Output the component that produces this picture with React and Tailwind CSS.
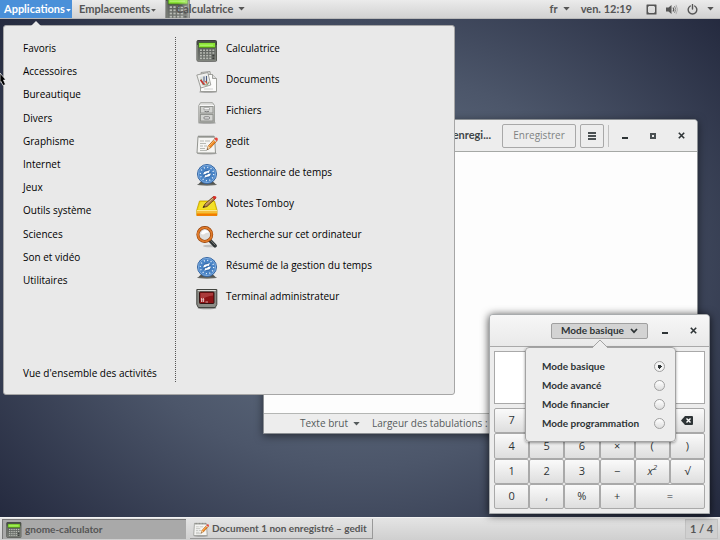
import React from "react";

function CalculatorIcon({ className }) {
  return (
    <svg viewBox="0 0 22 22" className={className} aria-hidden="true">
      <defs>
        <linearGradient id="calcBody" x1="0" y1="0" x2="0" y2="1">
          <stop offset="0" stopColor="#4c4f4c" />
          <stop offset="1" stopColor="#777b76" />
        </linearGradient>
      </defs>
      <ellipse cx="11" cy="21" rx="10.5" ry="1" fill="#000" opacity=".25" />
      <rect x="1" y="0.5" width="19.5" height="20.5" rx="1" fill="url(#calcBody)" stroke="#3c3e3a" />
      <path d="M1.5 5v15.500h18.500V5" fill="none" stroke="#92968e" strokeWidth=".7" />
      <rect x="2.500" y="2.500" width="17" height="5.500" fill="#3f6d1c" />
      <rect x="3" y="3" width="16" height="4.300" fill="#8ae234" />
      <path d="M4 5.200h13" stroke="#b6f578" strokeWidth="1" />
      {[9.5, 12.2, 14.9, 17.6].map((y) =>
        [4, 7.1, 10.2, 13.3, 16.4].map((x) => (
          <rect key={x + "-" + y} x={x} y={y} width="1.900" height="1.500" fill={x > 16 && y > 14 ? "#3a3c38" : "#b9bcb5"} />
        ))
      )}
    </svg>
  );
}

function DocumentsIcon({ className }) {
  return (
    <svg viewBox="0 0 22 22" className={className} aria-hidden="true">
      <ellipse cx="12" cy="21" rx="9" ry="1" fill="#000" opacity=".25" />
      <path d="M5 1.500l9-1 2 14-9 2z" fill="#e2e2df" stroke="#8b8d88" strokeWidth=".8" />
      <path d="M8 3.500h8.500l4 4v13H4.500V15z" fill="#fbfbfa" stroke="#8b8d88" strokeWidth=".8" />
      <path d="M16.500 3.500v4h4" fill="#ddd" stroke="#8b8d88" strokeWidth=".8" />
      <path d="M.8 4l11-2.500 3 12.500-10 3z" fill="#f0f0ee" stroke="#8b8d88" strokeWidth=".8" />
      <path d="M3.500 6l7.500-1.800 2 8.500-7 2z" fill="#dfe2df" />
      <path d="M5 8l2 5.500 4 .5 2-3" fill="none" stroke="#8aa184" strokeWidth="1.200" />
      <path d="M4.500 9l2.500 3 1.500 1.500" stroke="#c9302c" strokeWidth="1.600" fill="none" />
      <path d="M8 5.500v6M10.500 5v6" stroke="#4a5b83" strokeWidth="1" />
      <path d="M9.500 10l1.500 2.500" stroke="#d5502a" strokeWidth="1.300" />
      <path d="M8 18h9" stroke="#c6c6c4" strokeWidth=".8" />
    </svg>
  );
}

function FilesIcon({ className }) {
  return (
    <svg viewBox="0 0 22 22" className={className} aria-hidden="true">
      <defs>
        <linearGradient id="cabinet" x1="0" y1="0" x2="0" y2="1">
          <stop offset="0" stopColor="#e6e6e4" />
          <stop offset="1" stopColor="#a9aaa6" />
        </linearGradient>
      </defs>
      <ellipse cx="11" cy="21" rx="9" ry="1" fill="#000" opacity=".25" />
      <path d="M4.500.7h12l2 2.800v17H2.800v-17z" fill="url(#cabinet)" stroke="#999b96" strokeWidth=".9" />
      <path d="M3.500 3.500h14.500" stroke="#fff" strokeWidth=".8" />
      <rect x="4.500" y="4.500" width="12.500" height="6.500" fill="#d3d4d1" stroke="#8d8f8a" strokeWidth=".9" />
      <rect x="4.500" y="12.500" width="12.500" height="6.500" fill="#d3d4d1" stroke="#8d8f8a" strokeWidth=".9" />
      <rect x="8" y="5.800" width="5.500" height="2" fill="#fff" stroke="#888" strokeWidth=".6" />
      <path d="M8.500 9.300q2.300 1 4.500 0" fill="none" stroke="#777" />
      <rect x="8" y="14.800" width="5.500" height="2.200" rx=".8" fill="#eee" stroke="#666" strokeWidth=".8" />
    </svg>
  );
}

function GeditIcon({ className }) {
  return (
    <svg viewBox="0 0 22 22" className={className} aria-hidden="true">
      <ellipse cx="11" cy="20.500" rx="10" ry="1" fill="#000" opacity=".25" />
      <path d="M2 3.500h16.500l1 16.500H1z" fill="#f5f5f3" stroke="#888a85" strokeWidth=".9" />
      <path d="M2 3.500h16.500v1.500H2z" fill="#c5c6c2" />
      <path d="M3 2.500v2M5 2.500v2M7 2.500v2M9 2.500v2M11 2.500v2M13 2.500v2M15 2.500v2M17 2.500v2" stroke="#73756f" strokeWidth=".9" />
      <path d="M4 8h4M9 8h5M4 10.500h6M4 13h3M8 13h3M4 15.500h5M4 17.500h7" stroke="#b0b2ad" strokeWidth=".9" />
      <path d="M11 16.800l1.200-3.700L19 5.500l2.200 2-6.900 7.600z" fill="#f08a24" stroke="#a85106" strokeWidth=".7" />
      <path d="M13 13.200l6.500-7" stroke="#fcc583" strokeWidth=".8" />
      <path d="M11 16.800l1.200-3.700 2.100 2z" fill="#ecd7b0" />
      <path d="M11 16.800l.5-1.500.9.900z" fill="#222" />
      <path d="M18 6.500l1.700-1.900q2.300-.3 2.200 2l-1.700 1.900z" fill="#e7423c" />
      <path d="M17.500 7l.9-1 2.200 2-.9 1z" fill="#d7d9d4" />
    </svg>
  );
}

function TimeIcon({ className }) {
  return (
    <svg viewBox="0 0 22 22" className={className} aria-hidden="true">
      <path d="M2 20.500l3.500-3.500h11l3.500 3.500z" fill="#555753" />
      <ellipse cx="11" cy="20.500" rx="10" ry="1.200" fill="#555753" opacity=".8" />
      <circle cx="11" cy="10" r="9.500" fill="#4a84c6" stroke="#3566a3" />
      <circle cx="11" cy="10" r="8.600" fill="none" stroke="#86b4e4" strokeWidth=".8" />
      <circle cx="11" cy="10" r="6.700" fill="none" stroke="#e7f1fb" strokeWidth="1.300" strokeDasharray="1.100 2.408" />
      <circle cx="11" cy="10" r="4.300" fill="#3a6fae" />
      <path d="M7.200 10.500q.5-3.300 3.800-3.200l3-1.300-1.300 3q-1.700-1-2.700.8zM14.800 9.500q-.5 3.300-3.800 3.200l-2.700 1.100 1-2.800q1.700.8 2.700-1z" fill="#fff" />
    </svg>
  );
}

function TomboyIcon({ className }) {
  return (
    <svg viewBox="0 0 22 22" className={className} aria-hidden="true">
      <path d="M3.500 6h15l2.500 9v5.500H.8V15z" fill="#edd400" stroke="#c4a000" strokeWidth=".8" />
      <path d="M4.500 7h13.300l2 7.500H2z" fill="#f3e02a" />
      <path d="M.8 15h20.200v3.500H.8z" fill="#f5bd3a" />
      <path d="M.8 18.500h20.200v2.300H.8z" fill="#f57900" />
      <path d="M1 15.500h20" stroke="#fff0a0" strokeWidth=".8" />
      <path d="M7 12.500l2-3.500L17.500 1.500l2 2L11 11.500z" fill="#b5824c" stroke="#4f3412" strokeWidth=".8" />
      <path d="M9.500 9.800l8-7" stroke="#e2bf8e" strokeWidth=".8" />
      <path d="M7 12.500l1-1.800 1 1z" fill="#222" />
      <path d="M16.300 2.500L18 1q2.500-.3 2.500 1.800l-1.900 1.800z" fill="#d9302c" />
    </svg>
  );
}

function SearchIcon({ className }) {
  return (
    <svg viewBox="0 0 22 22" className={className} aria-hidden="true">
      <ellipse cx="14" cy="20" rx="7" ry="1.300" fill="#000" opacity=".18" />
      <path d="M13.500 14l5.500 5.800" stroke="#2e3436" strokeWidth="3.600" strokeLinecap="round" />
      <path d="M13.500 13.300l5.500 5.700" stroke="#777a75" strokeWidth="1" strokeLinecap="round" />
      <circle cx="8.800" cy="8.500" r="6.900" fill="#dededc" stroke="#8f3b02" strokeWidth="3" />
      <circle cx="8.800" cy="8.500" r="6.900" fill="none" stroke="#e07b2c" strokeWidth="1.900" />
      <path d="M5 8q.5-3.500 4-4 3-.2 4 2.500-3 0-4 1-1.500 1.500-4 .5z" fill="#fff" />
    </svg>
  );
}

function TerminalIcon({ className }) {
  return (
    <svg viewBox="0 0 22 22" className={className} aria-hidden="true">
      <ellipse cx="11" cy="20" rx="9.500" ry="1.300" fill="#000" opacity=".35" />
      <path d="M.8 1.500h20v15l-1.500 3H2.300l-1.500-3z" fill="#8b8c86" stroke="#42443f" />
      <path d="M1.800 2.500h18" stroke="#d9dad6" />
      <rect x="3.500" y="4" width="14.500" height="11.500" rx=".8" fill="#8d1416" stroke="#2b0b0b" strokeWidth=".9" />
      <path d="M4.500 5H17v2.500Q10.500 8 4.500 12z" fill="#c05555" opacity=".6" />
      <path d="M5.500 10v4M7.500 10v4M5 11.300h3.300M5 13h3.300M9.500 14h2.500" stroke="#eec9c9" strokeWidth=".8" />
    </svg>
  );
}

function Caret({ className }) {
  return (
    <svg viewBox="0 0 8 5" className={className} aria-hidden="true">
      <path d="M0 0h8L4 4.500z" fill="currentColor" />
    </svg>
  );
}

const categories = ["Favoris", "Accessoires", "Bureautique", "Divers", "Graphisme", "Internet", "Jeux", "Outils système", "Sciences", "Son et vidéo", "Utilitaires"];

const apps = [
  ["Calculatrice", CalculatorIcon],
  ["Documents", DocumentsIcon],
  ["Fichiers", FilesIcon],
  ["gedit", GeditIcon],
  ["Gestionnaire de temps", TimeIcon],
  ["Notes Tomboy", TomboyIcon],
  ["Recherche sur cet ordinateur", SearchIcon],
  ["Résumé de la gestion du temps", TimeIcon],
  ["Terminal administrateur", TerminalIcon],
];

function TopPanel() {
  return (
    <header className="flex h-[19px] shrink-0 items-stretch border-b border-[#b9b9b9] bg-linear-to-b from-[#ebebeb] to-[#d2d2d2] font-['Lato','Noto_Sans',sans-serif] text-[11px] font-bold text-[#555]">
      <button className="flex w-[72px] items-center gap-px bg-[#4a90d9] pl-1 text-white">
        Applications
        <Caret className="mt-[2px] h-[3px] w-[5px]" />
      </button>
      <button className="flex w-[93px] items-center gap-px pl-[7px]">
        Emplacements
        <Caret className="mt-[2px] h-[3px] w-[5px]" />
      </button>
      <button className="relative flex items-center gap-[5px] pl-[11px]">
        <span className="absolute inset-y-0 left-0 w-[26px] overflow-hidden [mask-image:linear-gradient(to_right,#000_50%,#0008)]">
          <CalculatorIcon className="-mt-[5px] h-[26px] w-[26px]" />
        </span>
        <span className="relative">Calculatrice</span>
        <Caret className="h-[4px] w-[7px]" />
      </button>
      <div className="ml-auto flex items-center pr-[6px]">
        <button className="flex items-center gap-[5px]">
          fr
          <Caret className="h-[4px] w-[7px]" />
        </button>
        <span className="ml-[11px]">ven. 12:19</span>
        <button className="ml-[14px] flex items-center gap-[9px]" aria-label="Système">
          <svg viewBox="0 0 11 11" className="h-[11px] w-[11px]" aria-hidden="true">
            <path d="M1 .5h9q.5 0 .5.500v9q0 .5-.5.500H1q-.5 0-.5-.5V1q0-.5.500-.5zM3 2L2 3v5l1 1h5l1-1V3L8 2z" fill="#555" fillRule="evenodd" />
          </svg>
          <svg viewBox="0 0 12 11" className="h-[11px] w-[12px]" aria-hidden="true">
            <path d="M0 3.500h2.500L5.500 1v9L2.500 7.500H0z" fill="#555" />
            <path d="M7 3.500q1.500 2 0 4" fill="none" stroke="#555" strokeWidth="1.200" />
            <path d="M8.500 2q2.500 3.500 0 7" fill="none" stroke="#888" />
            <path d="M10 .8q3 4.700 0 9.400" fill="none" stroke="#b0b0b0" />
          </svg>
          <svg viewBox="0 0 11 11" className="h-[11px] w-[11px]" aria-hidden="true">
            <path d="M3.300 2a4.300 4.300 0 1 0 4.400 0M5.500.5v4.500" fill="none" stroke="#555" strokeWidth="1.400" strokeLinecap="round" />
          </svg>
          <Caret className="h-[4px] w-[7px]" />
        </button>
      </div>
    </header>
  );
}

function AppMenu() {
  return (
    <nav className="absolute top-[25px] left-[3px] z-10 flex w-[452px] rounded-[3px] border border-[#a6a6a6] bg-[#e9e9e9] pt-[11px] pb-[12px] text-[10px] text-black">
      <svg viewBox="0 0 10 5" className="absolute -top-[5px] left-[27px] h-[5px] w-[10px]" aria-hidden="true">
        <path d="M0 5l5-5 5 5z" fill="#e9e9e9" />
      </svg>
      <div className="flex w-[172px] flex-col border-r border-dotted border-[#555] pl-[19px]">
        <div className="grid h-[255px] auto-rows-fr">
          {categories.map((c) => (
            <button key={c} className="text-left">{c}</button>
          ))}
        </div>
        <button className="mt-auto h-[18px] text-left">Vue d'ensemble des activités</button>
      </div>
      <div className="flex flex-1 flex-col pb-[66px] pl-[20px]">
        {apps.map(([name, Icon]) => (
          <button key={name} className="flex h-[31px] items-start gap-[8px] pt-[2px] text-left">
            <Icon className="mt-px h-[22px] w-[22px]" />
            <span className="leading-[18px]">{name}</span>
          </button>
        ))}
      </div>
    </nav>
  );
}

function WindowControls({ maximize }) {
  return (
    <>
      <button aria-label="Réduire" className="flex h-4 w-4 items-center justify-center">
        <span className="mt-[4px] h-[2px] w-[6px] bg-[#2e3436]" />
      </button>
      {maximize && (
        <button aria-label="Agrandir" className="flex h-4 w-4 items-center justify-center">
          <span className="h-[6px] w-[6px] border-2 border-[#4a5052]" />
        </button>
      )}
      <button aria-label="Fermer" className="flex h-4 w-4 items-center justify-center">
        <svg viewBox="0 0 7 7" className="h-[7px] w-[7px]" aria-hidden="true">
          <path d="M.8.8l5.400 5.400M6.200.8L.8 6.200" stroke="#2e3436" strokeWidth="1.600" />
        </svg>
      </button>
    </>
  );
}

function GeditWindow() {
  return (
    <section className="absolute top-[119px] left-[263px] flex h-[315px] w-[435px] flex-col rounded-t-[4px] border border-[#8c9094] bg-[#fdfdfd] shadow-[0_2px_8px_rgba(0,0,0,0.5)]">
      <header className="flex h-[32px] items-center justify-end rounded-t-[3px] border-b border-[#a5a8a5] bg-[#ededed] pr-[8px] text-[10px] text-[#3e4547]">
        <h2 className="mr-[11px] font-['Lato','Noto_Sans',sans-serif] text-[11px] font-bold">enregi...</h2>
        <button className="h-[24px] w-[74px] rounded-[2px] border border-[#a8a8a8] text-[#7e8283]">Enregistrer</button>
        <button aria-label="Menu" className="ml-[4px] flex h-[24px] w-[24px] flex-col items-center justify-center gap-px rounded-[2px] border border-[#a8a8a8]">
          <span className="h-[2px] w-[8px] bg-[#4a5052]" />
          <span className="h-[2px] w-[8px] bg-[#4a5052]" />
          <span className="h-[2px] w-[8px] bg-[#4a5052]" />
        </button>
        <span className="mr-[8px] ml-[4px] h-[22px] w-px bg-[#c0c0c0]" />
        <div className="flex gap-[12px]">
          <WindowControls maximize />
        </div>
      </header>
      <textarea aria-label="Document" className="w-full flex-1 resize-none bg-[#fdfdfd] outline-none" />
      <footer className="flex h-[20px] items-center gap-[12px] border-t border-[#b4b6b4] bg-[#ededed] pl-[36px] text-[10px] text-[#555b5c]">
        <button className="flex items-center gap-[5px]">
          Texte brut
          <Caret className="h-[4px] w-[7px]" />
        </button>
        <button>Largeur des tabulations : 8</button>
      </footer>
    </section>
  );
}

const keys = [
  { label: "7" },
  { name: "8" },
  { name: "9" },
  { name: "Diviser" },
  { name: "Annuler" },
  { label: "⌫" },
  ...["4", "5", "6", "×", "(", ")", "1", "2", "3", "−", "x²", "√", "0", ",", "%", "+", "="].map((label) => ({ label })),
];
const modes = ["Mode basique", "Mode avancé", "Mode financier", "Mode programmation"];

function Key({ label, name }) {
  const base = "flex items-center justify-center rounded-[2px] border border-[#a9a9a9] bg-linear-to-b from-[#fafafa] to-[#dedede]";
  if (label === "=") return <button className={base + " col-span-2"}>=</button>;
  if (label === "x²")
    return (
      <button className={base + " italic"}>
        x<sup className="text-[8px]">2</sup>
      </button>
    );
  if (label === "⌫")
    return (
      <button aria-label="Effacer" className={base}>
        <svg viewBox="0 0 12 9" className="h-[9px] w-[12px]" aria-hidden="true">
          <path d="M4 0h7q1 0 1 1v7q0 1-1 1H4L0 4.500z" fill="#2e3436" />
          <path d="M5.500 2.500l4 4M9.500 2.500l-4 4" stroke="#fff" strokeWidth="1.400" />
        </svg>
      </button>
    );
  return <button aria-label={name} className={base}>{label}</button>;
}

function CalculatorWindow() {
  return (
    <section className="absolute top-[314px] left-[489px] flex h-[200px] w-[221px] flex-col rounded-t-[4px] border border-[#a8abad] bg-[#ededed] text-[#2e3436] shadow-[0_1px_9px_rgba(0,0,0,0.75)]">
      <header className="flex h-[32px] shrink-0 items-center justify-end gap-[9px] rounded-t-[3px] border-b border-[#a9a9a9] bg-linear-to-b from-[#f7f7f7] to-[#e9e9e9] pr-[8px]">
        <button className="flex h-[16px] w-[97px] items-center justify-center gap-[6px] rounded-[2px] border border-[#a0a0a0] bg-[#d3d3d3] font-['Lato','Noto_Sans',sans-serif] text-[10px] font-bold">
          Mode basique
          <svg viewBox="0 0 8 6" className="h-[6px] w-[8px]" aria-hidden="true">
            <path d="M1 1l3 3.200L7 1" fill="none" stroke="#2e3436" strokeWidth="1.700" />
          </svg>
        </button>
        <div className="flex gap-[12px]">
          <WindowControls />
        </div>
      </header>
      <div className="flex flex-1 flex-col gap-[4px] p-[4px]">
        <input aria-label="Calcul" className="h-[53px] w-full border border-[#a9a9a9] bg-white" />
        <div className="grid flex-1 grid-cols-6 grid-rows-4 text-[11px]">
          {keys.map((k) => (
            <Key key={k.label || k.name} {...k} />
          ))}
        </div>
      </div>
      <fieldset className="absolute top-[32px] left-[35px] flex w-[151px] flex-col rounded-[4px] border border-[#a3a3a3] bg-[#ededed] pt-[9px] pr-[10px] pb-[8px] pl-[16px] font-['Lato','Noto_Sans',sans-serif] text-[10px] font-bold shadow-[0_1px_3px_rgba(0,0,0,0.4)]">
        <svg viewBox="0 0 16 9" className="absolute -top-[9px] left-[66px] h-[9px] w-[16px]" aria-hidden="true">
          <path d="M0 9l8-8 8 8" fill="#ededed" stroke="#a3a3a3" />
        </svg>
        {modes.map((m, i) => (
          <label key={m} className="flex h-[19px] items-center justify-between">
            {m}
            <input
              type="radio"
              name="mode"
              defaultChecked={i === 0}
              className="h-[11px] w-[11px] appearance-none rounded-full border border-[#a0a0a0] bg-linear-to-b from-white to-[#dedede] checked:bg-[radial-gradient(circle,#2e3436_2px,#f4f4f4_2px)]"
            />
          </label>
        ))}
      </fieldset>
    </section>
  );
}

function Taskbar() {
  return (
    <footer className="flex h-[23px] shrink-0 items-stretch gap-[4px] border-t border-[#f2f2f2] bg-linear-to-b from-[#e4e4e4] to-[#cfcfcf] px-[2px] pt-px pb-px font-['Lato','Noto_Sans',sans-serif] text-[10px] font-bold whitespace-nowrap text-[#555]">
      <button className="flex w-[184px] items-center gap-[3px] border-t border-l border-[#777] bg-[#a9a9a9] pl-[3px]">
        <CalculatorIcon className="h-[16px] w-[16px] shrink-0" />
        gnome-calculator
      </button>
      <button className="flex w-[183px] items-center gap-[3px] border-r border-b border-[#999] pl-[3px]">
        <GeditIcon className="h-[16px] w-[16px] shrink-0" />
        Document 1 non enregistré – gedit
      </button>
      <button className="ml-auto w-[33px] border border-[#c2c2c2] bg-[#d0d0d0] text-[11px]">1 / 4</button>
    </footer>
  );
}

export default function App() {
  return (
    <main className="relative flex h-screen flex-col overflow-hidden bg-[#3c4257] font-['Open_Sans','Noto_Sans',sans-serif]">
      <TopPanel />
      <div className="flex-1 bg-[radial-gradient(ellipse_70%_80%_at_50%_50%,#6b7a8b_0%,#4c566a_50%,#20253a_100%)]" />
      <GeditWindow />
      <AppMenu />
      <CalculatorWindow />
      <Taskbar />
      <svg viewBox="0 0 8 14" className="absolute top-[73px] left-0 z-20 h-[14px] w-[8px]" aria-hidden="true">
        <path d="M0 0l6 7H3.500l2 4.500-2.500 1L1 8.500 0 9.500z" fill="#000" stroke="#fff" strokeWidth=".7" />
      </svg>
    </main>
  );
}
